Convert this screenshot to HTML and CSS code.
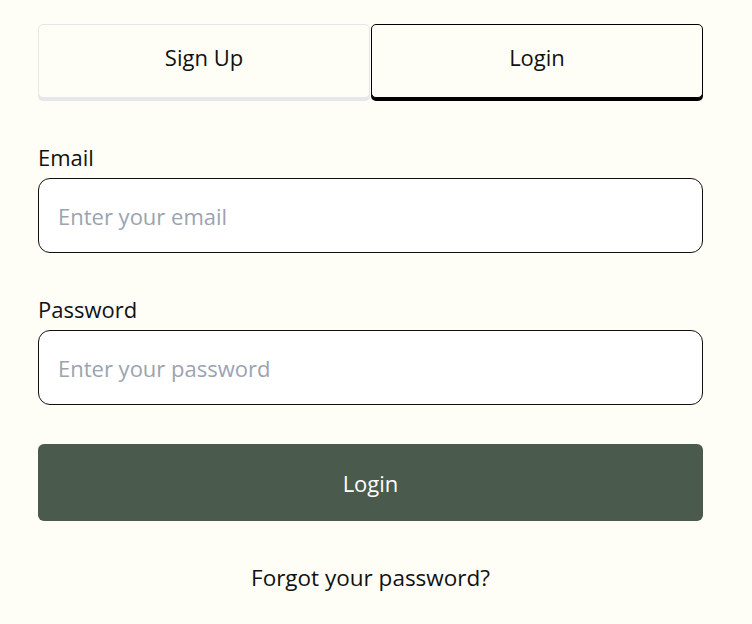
FILE: index.html
```html
<!DOCTYPE html>
<html>
<head>
<meta charset="utf-8">
<link rel="stylesheet" href="styles.css">
</head>
<body>
<div class="wrap">
  <div class="tabs">
    <button class="tab">Sign Up</button>
    <button class="tab active">Login</button>
  </div>
  <form class="form">
    <label class="field">
      <span class="label">Email</span>
      <input class="input" type="email" placeholder="Enter your email">
    </label>
    <label class="field">
      <span class="label">Password</span>
      <input class="input" type="password" placeholder="Enter your password">
    </label>
    <button class="submit" type="button">Login</button>
    <a class="forgot">Forgot your password?</a>
  </form>
</div>
</body>
</html>
```
FILE: styles.css
```css
html, body {
  margin: 0;
  padding: 0;
  background: #fefef6;
}
body {
  font-family: "Open Sans", Lato, sans-serif;
  color: #111;
}
.wrap {
  width: 665px;
  margin-left: 38px;
  padding-top: 24px;
}
.tabs {
  display: flex;
  gap: 1px;
}
.tab {
  flex: 1;
  height: 74px;
  padding: 0 0 8px;
  background: #fefef6;
  border: 1px solid #e5e7eb;
  border-radius: 5px;
  box-shadow: 0 3px 0 #e5e7eb;
  font-family: inherit;
  font-size: 22px;
  color: #111;
}
.tab.active {
  border-color: #000;
  box-shadow: 0 3px 0 #000;
}
.form {
  display: flex;
  flex-direction: column;
  margin-top: 46px;
}
.field {
  display: flex;
  flex-direction: column;
  margin-bottom: 43px;
}
.field:last-of-type {
  margin-bottom: 39px;
}
.label {
  font-size: 22px;
  line-height: 26px;
  margin-bottom: 8px;
}
.input {
  box-sizing: border-box;
  height: 75px;
  border: 1px solid #111;
  border-radius: 12px;
  background: #fff;
  padding: 0 19px;
  font-family: inherit;
  font-size: 22px;
  outline: none;
}
.input::placeholder {
  color: #9ca3af;
}
.submit {
  height: 77px;
  border: none;
  border-radius: 6px;
  background: #4a5a4c;
  color: #fff;
  font-family: inherit;
  font-size: 22px;
}
.forgot {
  margin-top: 42px;
  text-align: center;
  font-size: 22.5px;
  line-height: 30px;
  color: #111;
}
```
